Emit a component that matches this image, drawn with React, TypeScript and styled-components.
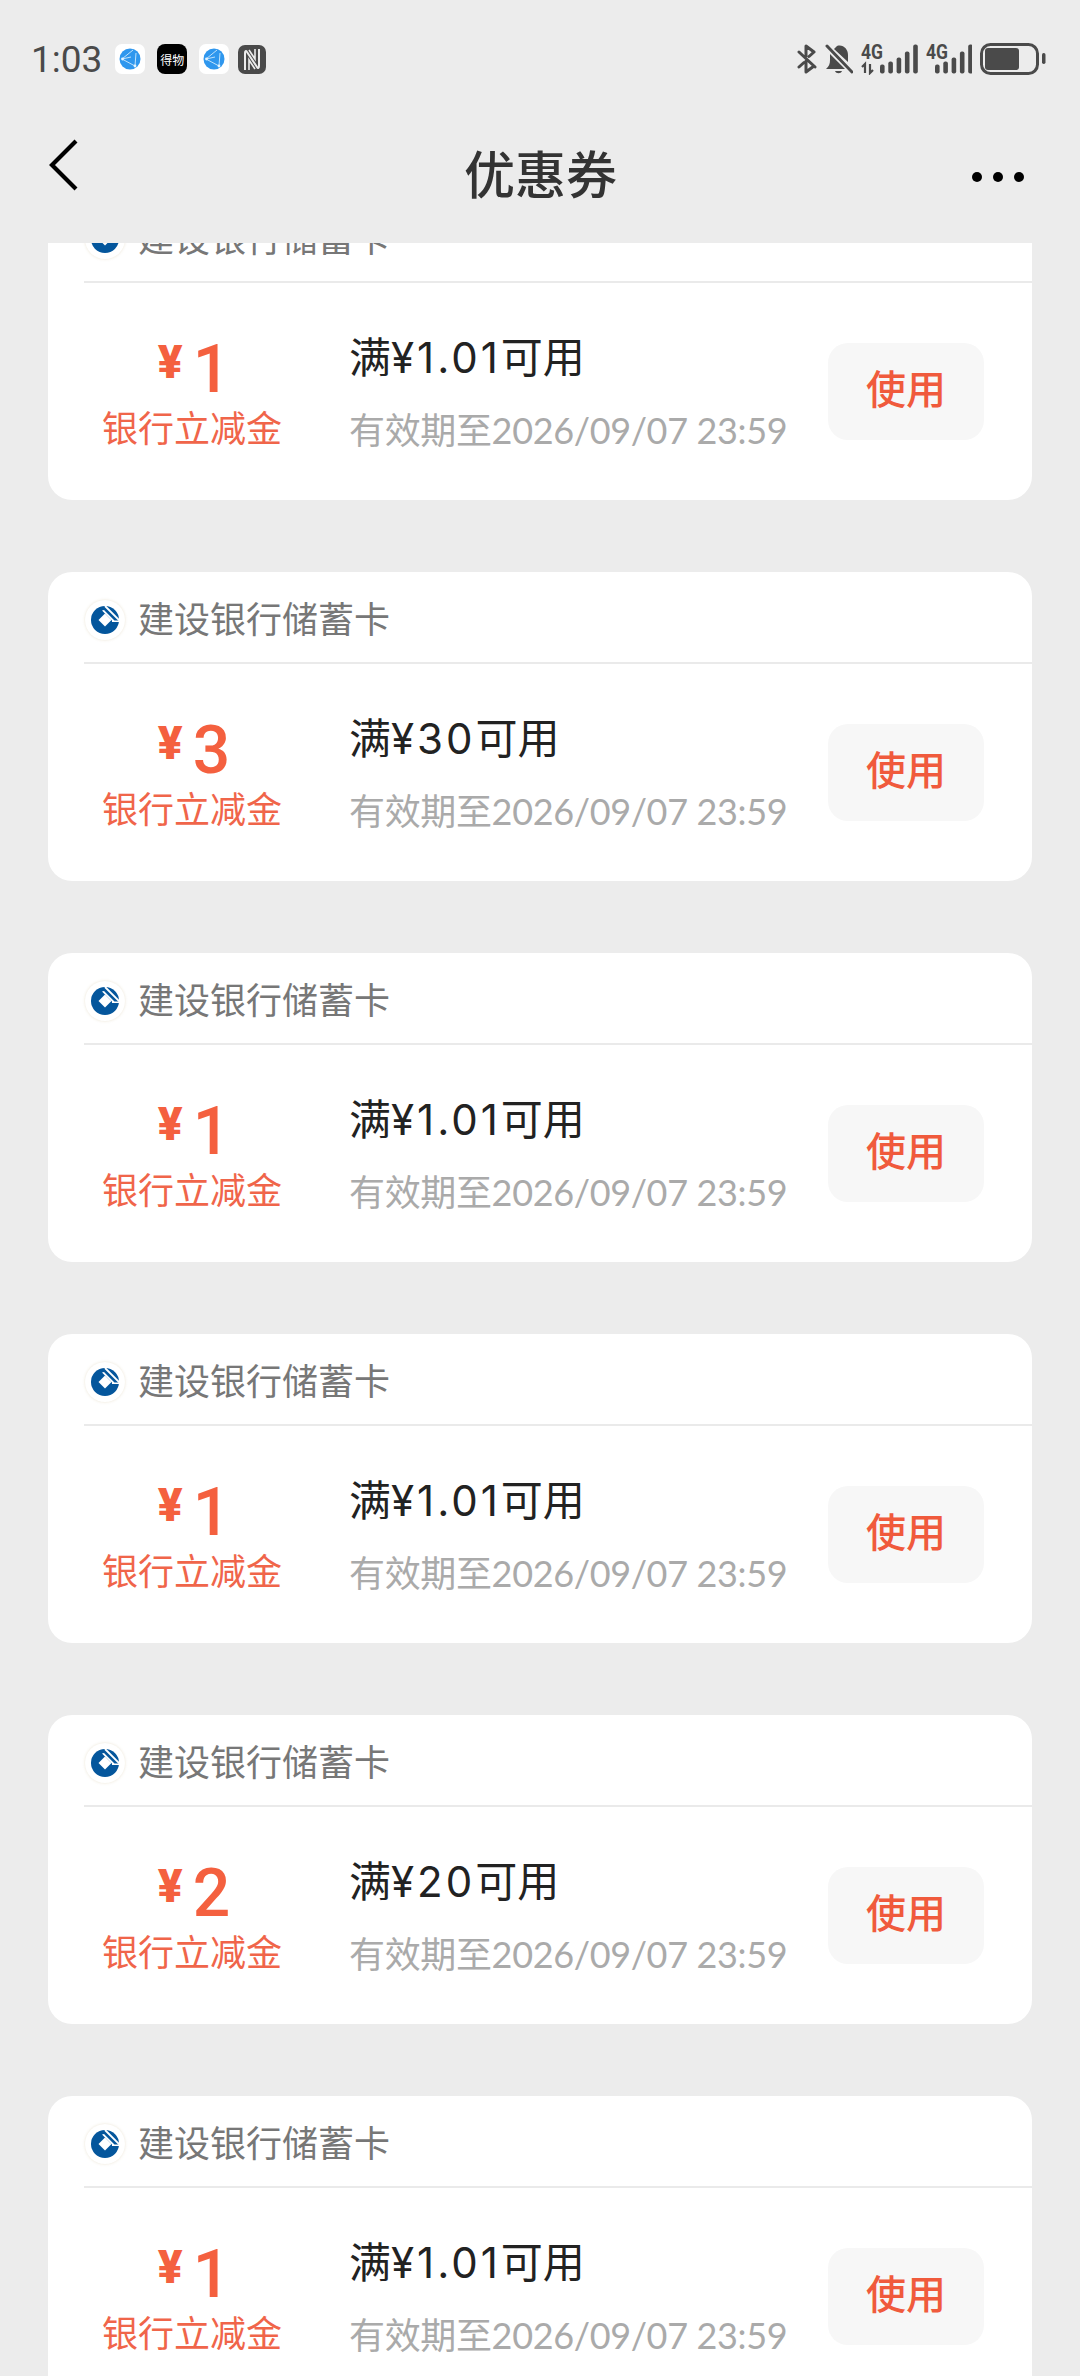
import { createGlobalStyle, styled } from "styled-components";

type Coupon = {
  id: number;
  amount: number;
  threshold: string;
};

const coupons: Coupon[] = [
  { id: 1, amount: 1, threshold: "1.01" },
  { id: 2, amount: 3, threshold: "30" },
  { id: 3, amount: 1, threshold: "1.01" },
  { id: 4, amount: 1, threshold: "1.01" },
  { id: 5, amount: 2, threshold: "20" },
  { id: 6, amount: 1, threshold: "1.01" },
];

const GlobeIcon = () => (
  <svg width="30" height="30" viewBox="0 0 30 30">
    <rect width="30" height="30" rx="7" fill="#fff" />
    <circle cx="15" cy="15" r="10.5" fill="#2f97ee" />
    <path d="M18 6 7 15l13 7 1-13M7 15l9-2" fill="none" stroke="#cfeafc" strokeWidth="0.9" />
    <circle cx="20" cy="22" r="1.4" fill="#e4f4ff" />
    <circle cx="7.500" cy="15" r="1.4" fill="#e4f4ff" />
  </svg>
);

const NfcSvg = styled.svg`
  margin-left: -3px;
`;

const NfcIcon = () => (
  <NfcSvg width="28" height="29" viewBox="0 0 28 29">
    <rect width="28" height="29" rx="7" fill="#4a4a4a" />
    <path d="M7 25V8c0-2 1-3 2-1l10 15c1 2 2 1 2-1V4" fill="none" stroke="#ececec" strokeWidth="2" />
    <path d="M11 25V15l6 9M17 4v10l-6-9" fill="none" stroke="#ececec" strokeWidth="1.6" />
  </NfcSvg>
);

const BluetoothOffIcon = () => (
  <svg width="20" height="31" viewBox="0 0 20 31">
    <path
      d="M9 12V2l8 6-5 4.500M9 17v11l8-6-5-4.500M2 8l16 15M2 23l5-4.500"
      fill="none"
      stroke="#4a4a4a"
      strokeWidth="3"
      strokeLinecap="round"
      strokeLinejoin="round"
    />
  </svg>
);

const BellOffIcon = () => (
  <svg width="28" height="31" viewBox="0 0 28 31">
    <path d="M12 2c6-2 11 3 11 9v7L9 5c1-1 2-2 3-3ZM5 10l15 15H1c3-3 4-5 4-9Z" fill="#4a4a4a" />
    <path d="M10 27h7c-1 3-6 3-7 0Z" fill="#4a4a4a" />
    <path d="M2 2l25 26" stroke="#4a4a4a" strokeWidth="3" strokeLinecap="round" />
  </svg>
);

const SignalSvg = styled.svg`
  margin-bottom: 4px;
`;

const SignalText = styled.text`
  font-family: "Roboto", sans-serif;
  font-size: 21px;
  font-weight: 700;
  fill: #4a4a4a;
`;

const signalHeights = [9, 12, 16, 22, 29];

const SignalIcon = ({ data }: { data?: boolean }) => {
  const startX = data ? 19 : 9;
  const width = data ? 57 : 46;
  return (
    <SignalSvg width={width} height="36" viewBox={`0 0 ${width} 36`}>
      <SignalText x="0" y="20" textLength="22" lengthAdjust="spacingAndGlyphs">
        4G
      </SignalText>
      {data && (
        <path
          d="M1 28l3-3v9M9 25v9l3-3"
          fill="none"
          stroke="#4a4a4a"
          strokeWidth="2.200"
        />
      )}
      {signalHeights.map((h, i) => (
        <rect key={i} x={startX + i * 8.300} y={34.500 - h} width="4.600" height={h} rx="2" fill="#4a4a4a" />
      ))}
    </SignalSvg>
  );
};

const BatteryIcon = () => (
  <svg width="66" height="33" viewBox="0 0 66 33">
    <rect x="1.500" y="1.500" width="56" height="29" rx="9" fill="none" stroke="#4a4a4a" strokeWidth="3" />
    <rect x="5" y="5" width="34" height="22" rx="3" fill="#4a4a4a" />
    <rect x="62" y="10" width="3.500" height="11" rx="1.700" fill="#4a4a4a" />
  </svg>
);

const BackIcon = () => (
  <svg width="30" height="54" viewBox="0 0 30 54">
    <path d="M27 3 3 27l24 24" fill="none" stroke="#000" strokeWidth="4.200" />
  </svg>
);

const BankLogo = () => (
  <LogoBadge>
    <svg width="30" height="30" viewBox="0 0 30 30">
      <circle cx="15" cy="15" r="14" fill="#04569c" />
      <path d="M15 8.500 21.500 15 15 21.500 8.500 15Z" fill="#fff" />
      <path d="M12 5.500 22 15.500V17H31V15.500H24.500L14 5Z" fill="#fff" />
      <path d="M15 1 30 16" stroke="#fff" strokeWidth="1.800" />
    </svg>
  </LogoBadge>
);

const App = (): JSX.Element => {
  return (
    <Screen>
      <GlobalStyle />
      <Header>
        <StatusBar>
          <StatusLeft>
            <Time>1:03</Time>
            <GlobeIcon />
            <DewuIcon>得物</DewuIcon>
            <GlobeIcon />
            <NfcIcon />
          </StatusLeft>
          <StatusRight>
            <BluetoothOffIcon />
            <BellOffIcon />
            <SignalIcon data />
            <SignalIcon />
            <BatteryIcon />
          </StatusRight>
        </StatusBar>
        <Nav>
          <BackButton>
            <BackIcon />
          </BackButton>
          <NavTitle>优惠券</NavTitle>
          <MoreButton>
            <Dot />
            <Dot />
            <Dot />
          </MoreButton>
        </Nav>
      </Header>
      <Scroller>
        <CouponList>
          {coupons.map((el) => (
            <CouponCard key={el.id}>
              <CardHead>
                <BankLogo />
                <BankName>建设银行储蓄卡</BankName>
              </CardHead>
              <CardBody>
                <AmountCol>
                  <Amount>
                    <Currency>¥</Currency>
                    <AmountNum>{el.amount}</AmountNum>
                  </Amount>
                  <AmountLabel>银行立减金</AmountLabel>
                </AmountCol>
                <InfoCol>
                  <CouponTitle>
                    满<Threshold>¥{el.threshold}</Threshold>可用
                  </CouponTitle>
                  <CouponDate>有效期至2026/09/07 23:59</CouponDate>
                </InfoCol>
                <UseButton>使用</UseButton>
              </CardBody>
            </CouponCard>
          ))}
        </CouponList>
      </Scroller>
    </Screen>
  );
};

export default App;

const GlobalStyle = createGlobalStyle`
  html, body {
    margin: 0;
    padding: 0;
    background-color: #ececec;
  }

  * {
    box-sizing: border-box;
  }
`;

const Screen = styled.div`
  width: 1080px;
  height: 2376px;
  display: flex;
  flex-direction: column;
  overflow: hidden;
  background-color: #ececec;
  font-family: "Noto Sans CJK SC", sans-serif;
`;

const Header = styled.header`
  flex: none;
  height: 243px;
`;

const StatusBar = styled.div`
  height: 118px;
  display: flex;
  align-items: center;
  justify-content: space-between;
  padding: 0 34px 0 31px;
`;

const StatusLeft = styled.div`
  display: flex;
  align-items: center;
  gap: 12px;
`;

const Time = styled.span`
  font-family: "Roboto", sans-serif;
  font-size: 37px;
  color: #4a4a4a;
  margin-right: 1px;
`;

const DewuIcon = styled.span`
  width: 30px;
  height: 30px;
  display: flex;
  align-items: center;
  justify-content: center;
  border-radius: 8px;
  background-color: #000;
  color: #fff;
  font-size: 12px;
  white-space: nowrap;
`;

const StatusRight = styled.div`
  display: flex;
  align-items: center;
  gap: 8px;
`;

const Nav = styled.div`
  height: 114px;
  display: grid;
  grid-template-columns: 1fr auto 1fr;
  align-items: center;
  padding: 0 48px 0 49px;
`;

const BackButton = styled.div`
  display: flex;
  margin-bottom: 20px;
`;

const NavTitle = styled.h1`
  margin: 0 0 6px;
  font-size: 51px;
  font-weight: 500;
  line-height: 60px;
  color: #333333;
`;

const MoreButton = styled.div`
  display: flex;
  justify-content: flex-end;
  gap: 11px;
  padding-right: 8px;
  margin-top: 4px;
`;

const Dot = styled.span`
  width: 10px;
  height: 10px;
  border-radius: 50%;
  background-color: #000;
`;

const Scroller = styled.div`
  flex: 1;
  min-height: 0;
  overflow: hidden;
`;

const CouponList = styled.div`
  display: flex;
  flex-direction: column;
  gap: 72px;
  margin-top: -52px;
  padding: 0 48px;
`;

const CouponCard = styled.section`
  flex: none;
  height: 309px;
  border-radius: 24px;
  background-color: #ffffff;
  overflow: hidden;
`;

const CardHead = styled.div`
  height: 92px;
  display: flex;
  align-items: center;
  gap: 13px;
  margin-left: 36px;
  padding-left: 1px;
  border-bottom: 2px solid #eaeaea;
`;

const LogoBadge = styled.span`
  width: 40px;
  height: 40px;
  margin-top: 5px;
  display: flex;
  align-items: center;
  justify-content: center;
  border-radius: 50%;
  box-shadow: 0 0 3px rgba(210, 195, 160, 0.45);
`;

const BankName = styled.span`
  font-size: 36px;
  line-height: 44px;
  color: #777777;
`;

const CardBody = styled.div`
  display: grid;
  grid-template-columns: 288px 1fr 156px;
  column-gap: 13px;
  height: 217px;
  padding-right: 48px;
`;

const AmountCol = styled.div`
  display: flex;
  flex-direction: column;
  align-items: center;
  padding-top: 52px;
`;

const Amount = styled.div`
  display: flex;
  align-items: flex-start;
  gap: 10px;
  height: 70px;
  padding-left: 4px;
  color: #f4603f;
  font-family: "Roboto", sans-serif;
`;

const Currency = styled.span`
  font-size: 46px;
  font-weight: 900;
  line-height: 55px;
`;

const AmountNum = styled.span`
  font-size: 66px;
  font-weight: 500;
  line-height: 70px;
`;

const AmountLabel = styled.span`
  font-size: 36px;
  line-height: 42px;
  color: #f0654a;
`;

const InfoCol = styled.div`
  display: flex;
  flex-direction: column;
  padding-top: 45px;
`;

const CouponTitle = styled.span`
  font-family: "Inter", "Noto Sans CJK SC", sans-serif;
  font-size: 42px;
  line-height: 60px;
  color: #222222;
`;

const Threshold = styled.span`
  letter-spacing: 3px;
`;

const CouponDate = styled.span`
  margin-top: 20px;
  font-family: "Lato", "Noto Sans CJK SC", sans-serif;
  font-size: 36px;
  line-height: 44px;
  letter-spacing: -0.35px;
  color: #aaaaaa;
  white-space: nowrap;
`;

const UseButton = styled.button`
  width: 156px;
  height: 97px;
  margin-top: 60px;
  padding: 0 0 10px;
  border: 0;
  border-radius: 20px;
  background-color: #f7f7f7;
  color: #f05a3c;
  font-family: inherit;
  font-size: 40px;
  font-weight: 500;
`;
